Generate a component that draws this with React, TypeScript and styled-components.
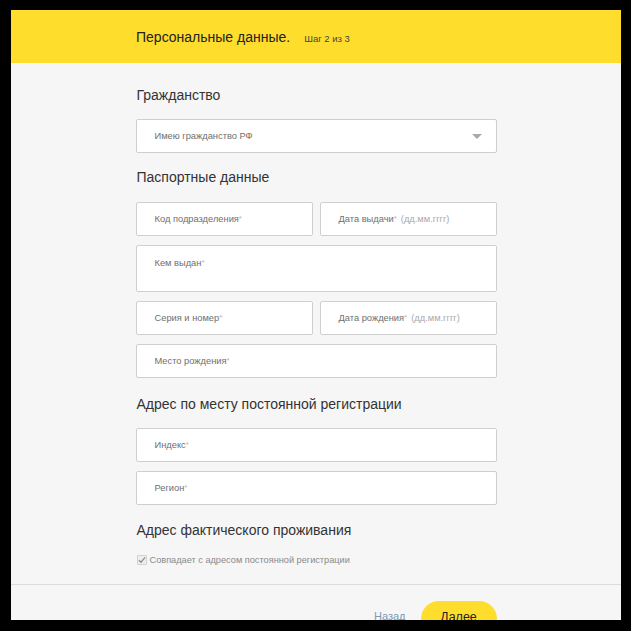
import React from 'react';
import styled, { createGlobalStyle } from 'styled-components';

const GlobalStyle = createGlobalStyle`
  html, body {
    margin: 0;
    padding: 0;
    background: #000;
  }
  body {
    font-family: 'Liberation Sans', Arial, sans-serif;
    color: #333;
  }
`;

const Frame = styled.div`
  margin: 10px 10px 0 11px;
  height: 610px;
  background: #f6f6f6;
  overflow: hidden;
  display: flex;
  flex-direction: column;
`;

const Header = styled.header`
  height: 53px;
  flex-shrink: 0;
  background: #ffdd2d;
  display: flex;
  align-items: center;
`;

const HeaderInner = styled.div`
  width: 361px;
  margin: 0 auto;
  padding-left: 1px;
  display: flex;
  align-items: baseline;
  gap: 14px;
`;

const Title = styled.h1`
  margin: 0;
  font-size: 14px;
  font-weight: 400;
  color: #222;
`;

const Step = styled.span`
  font-size: 9.5px;
  color: #444;
`;

const Main = styled.main`
  width: 361px;
  margin: 0 auto;
  padding-top: 22px;
  display: flex;
  flex-direction: column;
`;

const Heading = styled.h2<{ $top?: number; $bottom?: number }>`
  margin: ${(p) => p.$top ?? 0}px 0 ${(p) => p.$bottom ?? 14}px 1px;
  font-size: 14px;
  line-height: 20px;
  font-weight: 400;
  color: #333;
`;

const Fields = styled.div`
  display: flex;
  flex-direction: column;
  gap: 9px;
`;

const Row = styled.div`
  display: grid;
  grid-template-columns: 1fr 1fr;
  gap: 7px;
`;

const Field = styled.div<{ $tall?: boolean }>`
  box-sizing: border-box;
  height: ${(p) => (p.$tall ? 47 : 34)}px;
  background: #fff;
  border: 1px solid #cfcfcf;
  border-radius: 2px;
  padding: 0 18px;
  display: flex;
  align-items: ${(p) => (p.$tall ? 'flex-start' : 'center')};
  padding-top: ${(p) => (p.$tall ? 12 : 0)}px;
  font-size: 9.3px;
  color: #6f6f6f;
  position: relative;
`;

const Star = styled.span`
  color: #b5b5b5;
  font-size: 8px;
  align-self: flex-start;
`;

const Hint = styled.span`
  color: #aaa;
  margin-left: 4px;
`;

const Label = styled.span`
  display: inline-flex;
  align-items: flex-start;
`;

const Arrow = styled.span`
  position: absolute;
  right: 14px;
  top: 50%;
  margin-top: -2px;
  width: 0;
  height: 0;
  border-left: 5px solid transparent;
  border-right: 5px solid transparent;
  border-top: 5px solid #a9a9a9;
`;

const CheckRow = styled.label`
  display: flex;
  align-items: center;
  gap: 3px;
  height: 12px;
  font-size: 9.2px;
  color: #8a8a8a;
  margin-left: 1px;
`;

const CheckBox = styled.span`
  box-sizing: border-box;
  width: 10px;
  height: 10px;
  border: 1px solid #d2d2d2;
  background: #efefef;
  border-radius: 1px;
  display: flex;
  align-items: center;
  justify-content: center;
`;

const Divider = styled.div`
  margin-top: 18px;
  height: 1px;
  background: #dcdcdc;
  flex-shrink: 0;
`;

const Footer = styled.footer`
  width: 361px;
  margin: 0 auto;
  padding-top: 16px;
  display: flex;
  justify-content: flex-end;
  align-items: flex-start;
  gap: 15px;
`;

const Back = styled.a`
  font-size: 11px;
  color: #7d98b8;
  margin-top: 9px;
  text-decoration: none;
`;

const Next = styled.button`
  width: 76px;
  height: 36px;
  border: none;
  border-radius: 18px;
  background: #ffdd2d;
  font-family: 'Liberation Sans', Arial, sans-serif;
  font-size: 12.5px;
  color: #222;
  padding: 0;
  padding-bottom: 5px;
`;

function Input({ label, hint, tall, select }: { label: string; hint?: string; tall?: boolean; select?: boolean }) {
  return (
    <Field $tall={tall}>
      <Label>
        {label}
        {!select && <Star>*</Star>}
        {hint && <Hint>{hint}</Hint>}
      </Label>
      {select && <Arrow />}
    </Field>
  );
}

export default function App() {
  return (
    <>
      <GlobalStyle />
      <Frame>
        <Header>
          <HeaderInner>
            <Title>Персональные данные.</Title>
            <Step>Шаг 2 из 3</Step>
          </HeaderInner>
        </Header>
        <Main>
          <Heading>Гражданство</Heading>
          <Input label="Имею гражданство РФ" select />

          <Heading $top={14} $bottom={15}>Паспортные данные</Heading>
          <Fields>
            <Row>
              <Input label="Код подразделения" />
              <Input label="Дата выдачи" hint="(дд.мм.гггг)" />
            </Row>
            <Input label="Кем выдан" tall />
            <Row>
              <Input label="Серия и номер" />
              <Input label="Дата рождения" hint="(дд.мм.гггг)" />
            </Row>
            <Input label="Место рождения" />
          </Fields>

          <Heading $top={16}>Адрес по месту постоянной регистрации</Heading>
          <Fields>
            <Input label="Индекс" />
            <Input label="Регион" />
          </Fields>

          <Heading $top={15}>Адрес фактического проживания</Heading>
          <CheckRow>
            <CheckBox>
              <svg width="9" height="8" viewBox="0 0 9 8">
                <path d="M1 4.2 L3.4 6.5 L8 1" fill="none" stroke="#8c8c8c" strokeWidth="1.4" />
              </svg>
            </CheckBox>
            Совпадает с адресом постоянной регистрации
          </CheckRow>
        </Main>
        <Divider />
        <Footer>
          <Back href="#">Назад</Back>
          <Next>Далее</Next>
        </Footer>
      </Frame>
    </>
  );
}
